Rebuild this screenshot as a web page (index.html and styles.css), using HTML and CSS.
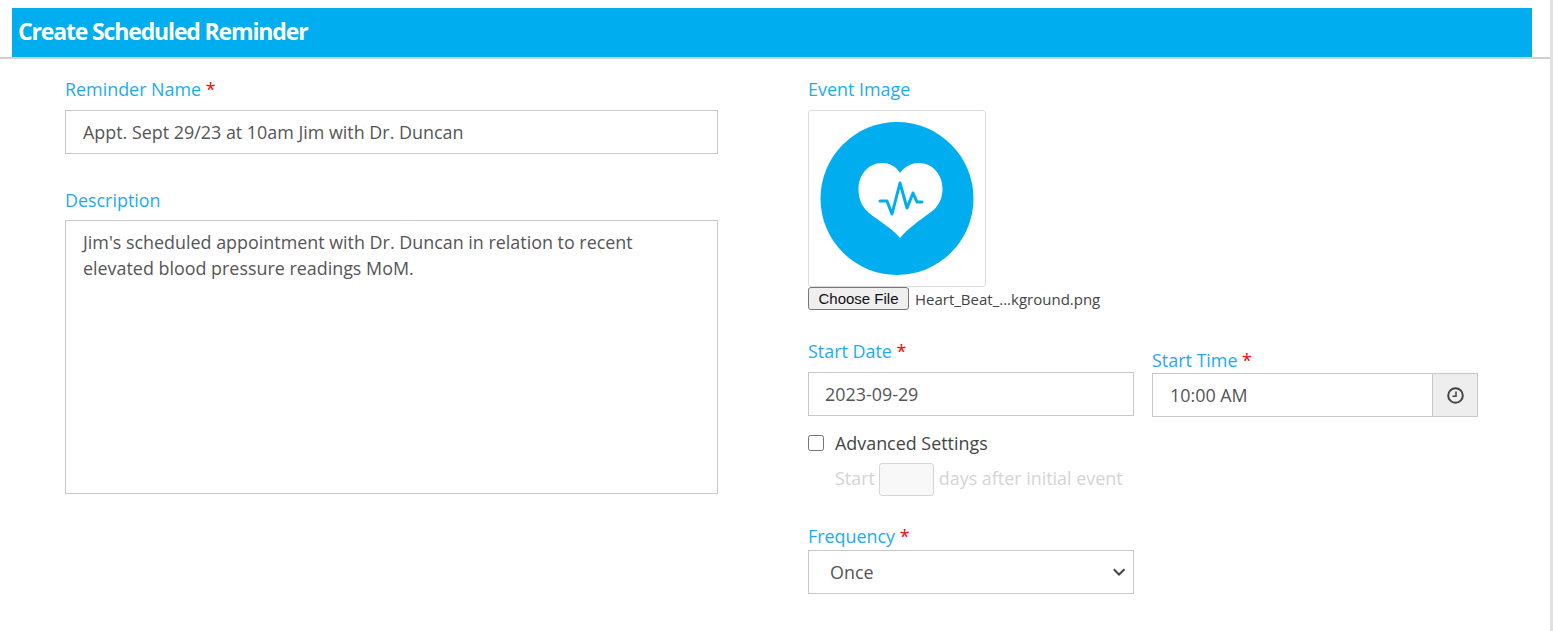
FILE: index.html
```html
<!DOCTYPE html>
<html lang="en">
<head>
  <meta charset="UTF-8">
  <title>Create Scheduled Reminder</title>
  <link rel="stylesheet" href="styles.css">
</head>
<body>
  <div class="page">
    <div class="header">
      <h1 class="title-bar">Create Scheduled Reminder</h1>
    </div>

    <form class="form-grid">
      <div class="col-left">
        <div class="form-group name-group">
          <label for="name">Reminder Name <span class="req">*</span></label>
          <input class="text-input" type="text" id="name" value="Appt. Sept 29/23 at 10am Jim with Dr. Duncan">
        </div>
        <div class="form-group desc-group">
          <label for="desc">Description</label>
          <textarea class="text-input desc-input" id="desc">Jim's scheduled appointment with Dr. Duncan in relation to recent elevated blood pressure readings MoM.</textarea>
        </div>
      </div>

      <div class="col-right">
        <div class="form-group image-group">
          <label>Event Image</label>
          <div class="thumb">
            <svg width="176" height="176" viewBox="0 0 176 176">
              <circle cx="88" cy="87.500" r="76.500" fill="#00aeef"/>
              <path d="M91 127 C84 118 70 110 60 102 C52 95 49.500 87 49.500 78 C49.500 63 60 52 73 52 C80 52 87 55 91 62 C96 55 103 52 110 52 C123 52 133.500 63 133.500 78 C133.500 87 130 95 122 101 C111 109 98 118 91 127 Z" fill="#fff"/>
              <path d="M71 90 H78 L83 103 L91 72 L98 97 L104 82 L108 91 H113" fill="none" stroke="#00aeef" stroke-width="3" stroke-linecap="round" stroke-linejoin="round"/>
            </svg>
          </div>
          <div class="file-row">
            <button type="button" class="file-btn">Choose File</button>
            <span class="file-name">Heart_Beat_...kground.png</span>
          </div>
        </div>

        <div class="date-row">
          <div class="form-group">
            <label for="start">Start Date <span class="req">*</span></label>
            <input class="text-input date-input" type="text" id="start" value="2023-09-29">
          </div>
          <div class="form-group time-group">
            <label for="time">Start Time <span class="req">*</span></label>
            <div class="input-group">
              <input class="text-input" type="text" id="time" value="10:00 AM">
              <span class="addon">
                <svg width="17" height="17" viewBox="0 0 17 17">
                  <circle cx="8.500" cy="8.500" r="7.300" fill="none" stroke="#444" stroke-width="2"/>
                  <path d="M9 4.500 V9.300 H5.500" fill="none" stroke="#444" stroke-width="1.500"/>
                </svg>
              </span>
            </div>
          </div>
        </div>

        <label class="check-row">
          <input type="checkbox" class="check">
          <span>Advanced Settings</span>
        </label>
        <div class="days-row">
          <span>Start</span>
          <input type="text" class="days-input" disabled>
          <span>days after initial event</span>
        </div>

        <div class="form-group freq-group">
          <label for="freq">Frequency <span class="req">*</span></label>
          <div class="select-box">
            <span id="freq">Once</span>
            <svg width="14" height="8" viewBox="0 0 14 8">
              <path d="M1.800 1.200 L7 6.500 L12.500 1.200" fill="none" stroke="#444" stroke-width="2"/>
            </svg>
          </div>
        </div>
      </div>
    </form>
  </div>
</body>
</html>
```

FILE: styles.css
```css
html, body {
  margin: 0;
  height: 100%;
  overflow: hidden;
}

body {
  font-family: "Open Sans", sans-serif;
  font-size: 17.9px;
  color: #555;
  background-color: white;
}

* {
  box-sizing: border-box;
}

.page {
  width: 1553px;
  height: 631px;
  border-right: 3px solid #e2e2e2;
}

.header {
  padding: 8px 18px 0 12px;
  border-bottom: 2px solid #d0d0d0;
}

.title-bar {
  margin: 0;
  height: 49px;
  padding-left: 6px;
  font-size: 23px;
  line-height: 47px;
  font-weight: 700;
  letter-spacing: -1.15px;
  color: white;
  background-color: #00aeef;
}

.form-grid {
  display: grid;
  grid-template-columns: 653px 670px;
  column-gap: 90px;
  padding: 18px 0 0 65px;
}

.form-group label {
  display: block;
  height: 33px;
  line-height: 25px;
  color: #1eaaf1;
}

.req {
  color: #f00;
}

.text-input {
  display: block;
  width: 100%;
  height: 44px;
  padding: 0 17px;
  font-family: "Open Sans", sans-serif;
  font-size: 17.9px;
  color: #555;
  background-color: white;
  border: 1px solid #c8c8c8;
  border-radius: 0;
  outline: none;
}

.date-input {
  padding-left: 16px;
}

.name-group {
  margin-bottom: 33px;
}

.desc-group label {
  padding-top: 1px;
}

.desc-input {
  height: 274px;
  padding: 8px 17px;
  line-height: 26px;
  resize: none;
}

.image-group {
  margin-bottom: 29px;
}

.thumb {
  width: 178px;
  height: 177px;
  padding: 0;
  border: 1px solid #ddd;
  border-radius: 3px;
}

.thumb svg {
  display: block;
}

.file-row {
  display: flex;
  align-items: center;
  gap: 6px;
  height: 23px;
}

.file-btn {
  width: 101px;
  height: 23px;
  padding: 0;
  font-family: "Liberation Sans", Arial, sans-serif;
  font-size: 15px;
  color: #111;
  background-color: #efefef;
  border: 1px solid #767676;
  border-radius: 3px;
}

.file-name {
  font-size: 15px;
  color: #444;
}

.date-row {
  display: grid;
  grid-template-columns: 326px 326px;
  column-gap: 18px;
}

.time-group {
  padding-top: 9px;
}

.time-group label {
  height: 25px;
}

.input-group {
  display: flex;
}

.addon {
  display: flex;
  flex: 0 0 45px;
  align-items: center;
  justify-content: center;
  height: 44px;
  background-color: #eee;
  border: 1px solid #c8c8c8;
  border-left: none;
}

.check-row {
  display: flex;
  align-items: center;
  gap: 11px;
  height: 24px;
  margin-top: 14px;
  color: #444;
}

.check {
  width: 16px;
  height: 16px;
  margin: 0;
}

.days-row {
  display: flex;
  align-items: center;
  gap: 4px;
  height: 34px;
  margin-top: 7px;
  padding-left: 27px;
  color: #d4d4d4;
}

.days-row span {
  margin-top: -2px;
}

.days-input {
  width: 55px;
  height: 33px;
  margin-right: 1px;
  background-color: #f8f8f8;
  border: 1px solid #d6d6d6;
  border-radius: 3px;
}

.freq-group {
  margin-top: 28px;
}

.freq-group label {
  height: 26px;
  line-height: 24px;
}

.select-box {
  display: flex;
  align-items: center;
  justify-content: space-between;
  width: 326px;
  height: 44px;
  padding: 0 7px 0 21px;
  border: 1px solid #c8c8c8;
}
```
